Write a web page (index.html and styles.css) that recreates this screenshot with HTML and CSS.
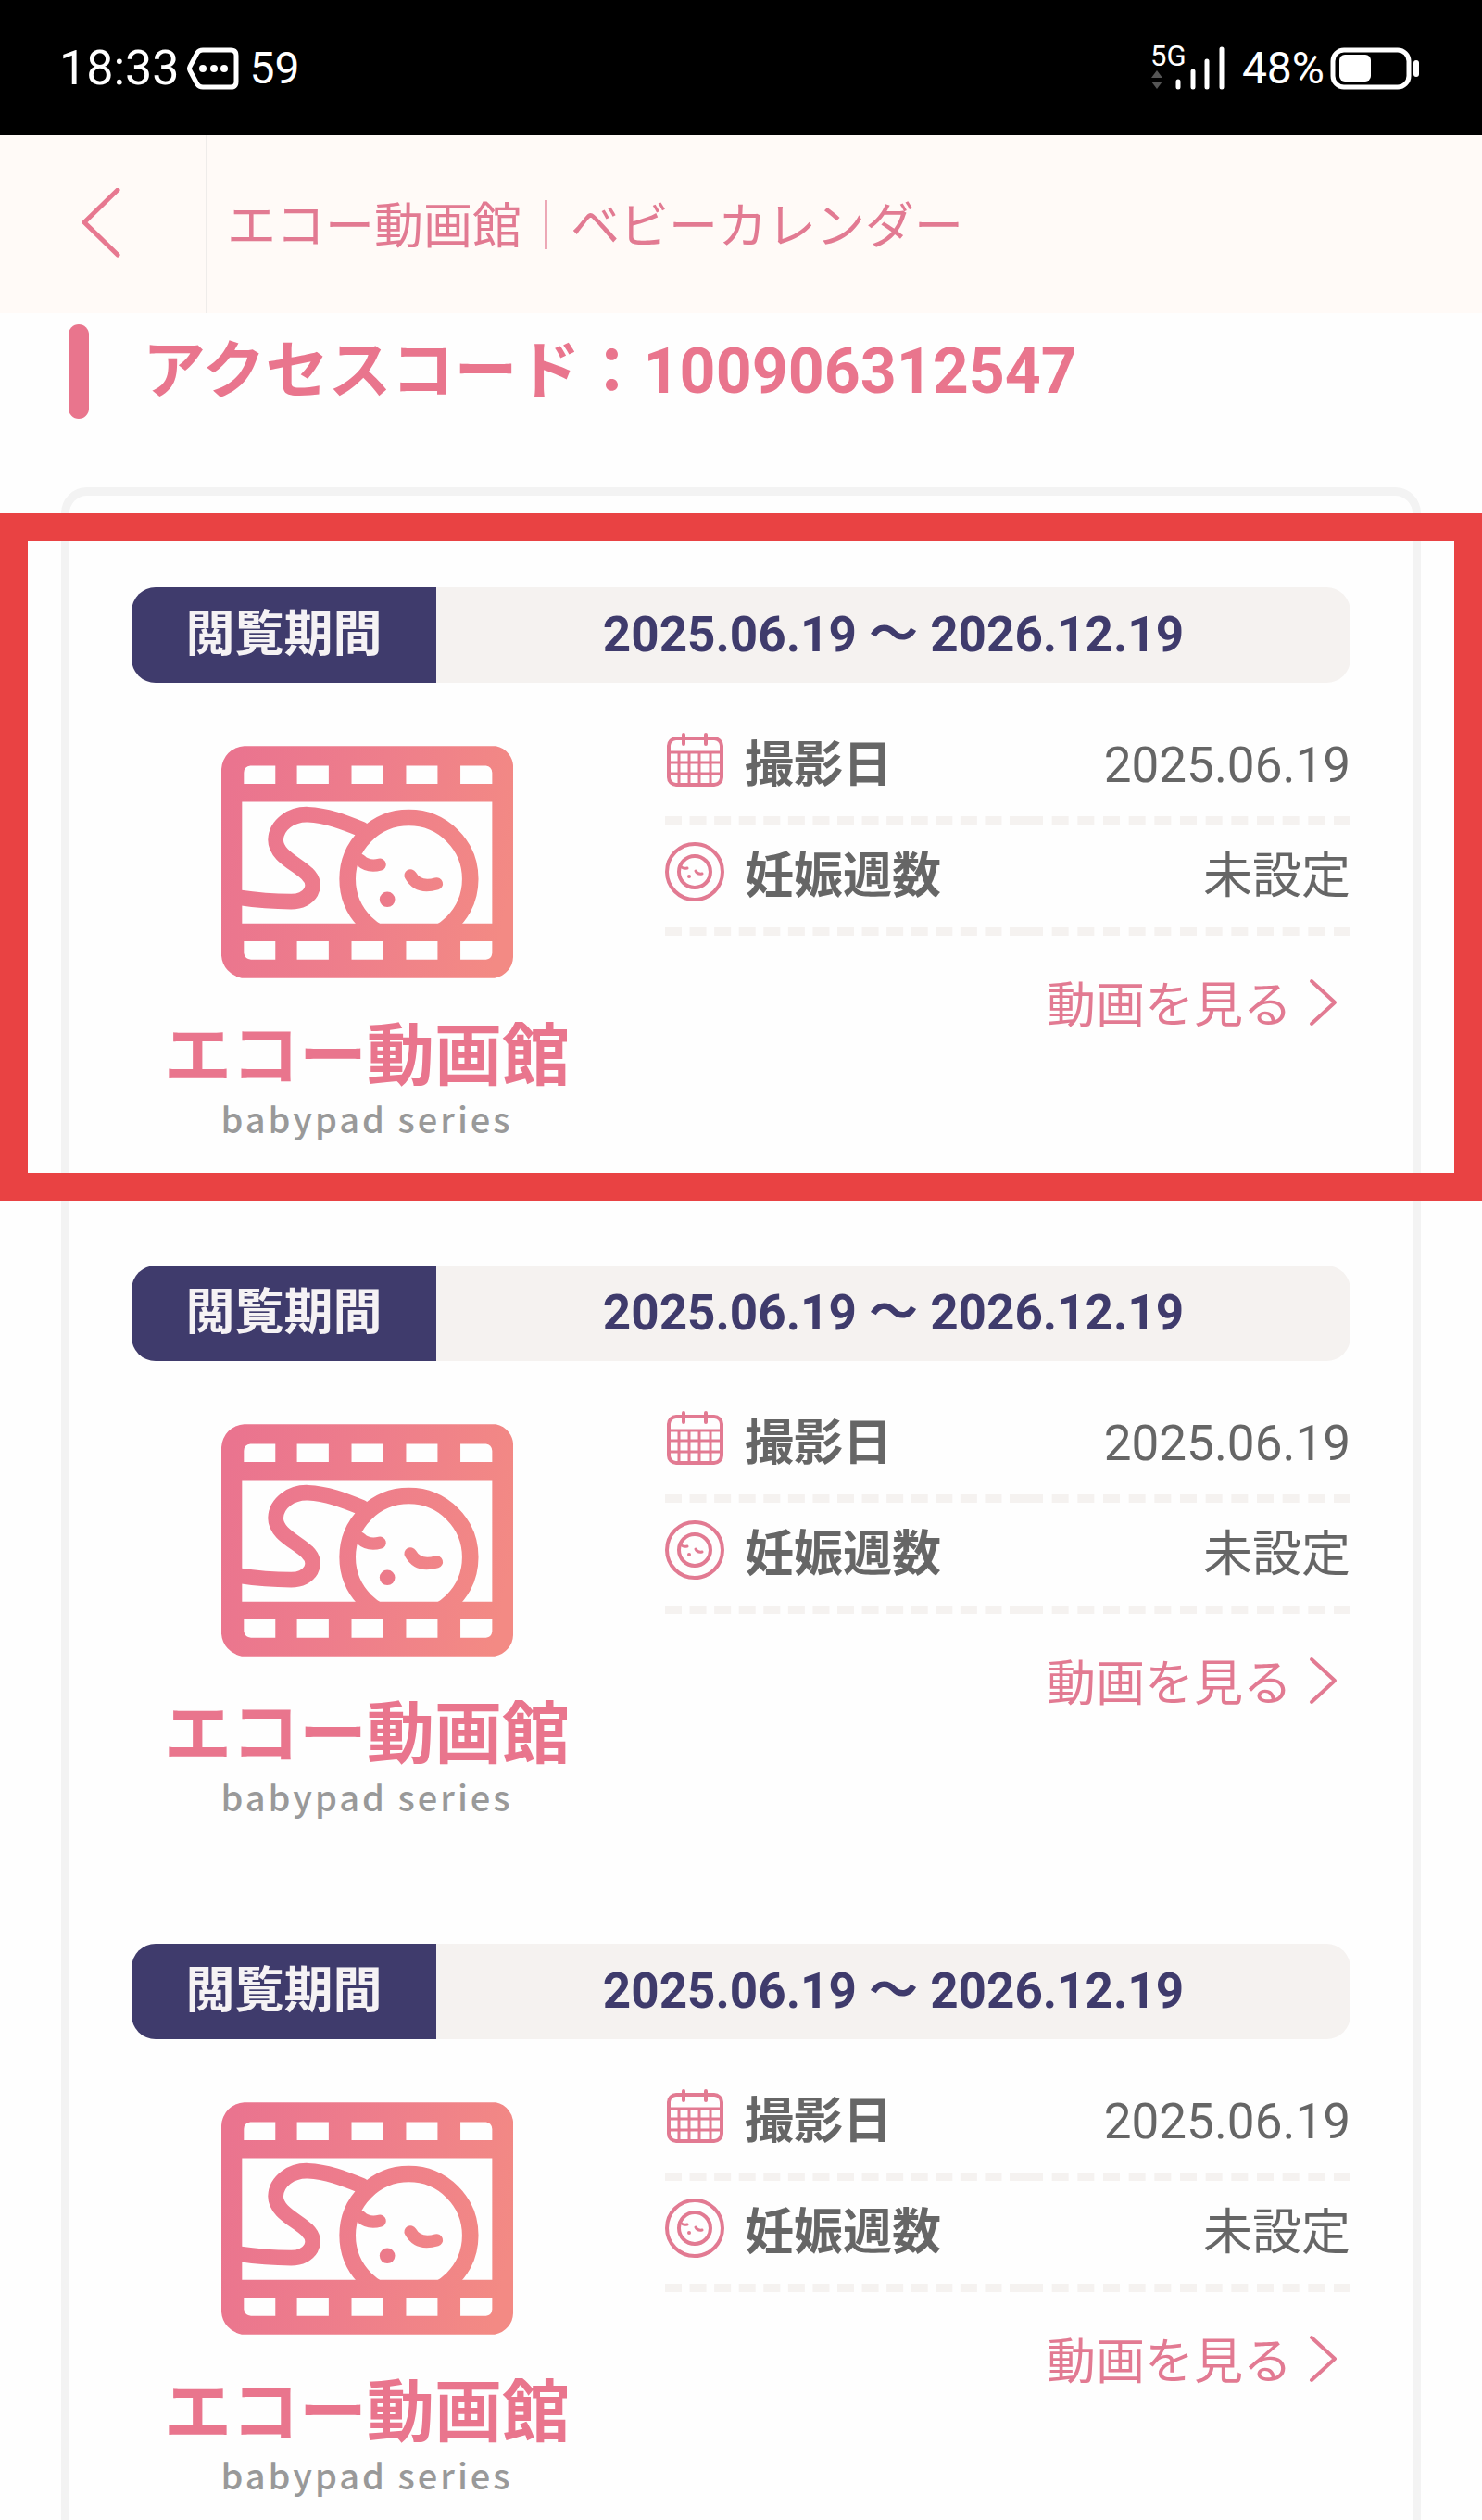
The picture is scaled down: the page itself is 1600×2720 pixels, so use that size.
FILE: index.html
```html
<!DOCTYPE html>
<html lang="ja">
<head>
<meta charset="utf-8">
<meta name="viewport" content="width=device-width, initial-scale=1">
<title>エコー動画館｜ベビーカレンダー</title>
<link rel="stylesheet" href="styles.css">
</head>
<body>
<svg class="defs" aria-hidden="true">
  <defs>
    <linearGradient id="film-fill" gradientUnits="userSpaceOnUse" x1="54" y1="300" x2="1000" y2="500">
      <stop offset="0" stop-color="#ea748f"/>
      <stop offset="0.5" stop-color="#ee7e8b"/>
      <stop offset="1" stop-color="#f38a84"/>
    </linearGradient>
    <clipPath id="film-window"><rect x="110" y="250" width="830" height="410"/></clipPath>
  </defs>
  <symbol id="film" viewBox="54 76 946 752">
    <path fill="url(#film-fill)" fill-rule="evenodd" d="M128 76H944A70 70 0 0 1 1000 150V755A72 72 0 0 1 940 828H120A80 80 0 0 1 54 755V150A78 78 0 0 1 128 76ZM121 257V651H932V257ZM148 140Q128 142 127 162V198H229V140ZM299 140V198H402V140ZM476 140V198H578V140ZM653 140V198H755V140ZM829 140V198H932V162Q930 142 912 140ZM127 709V747Q130 766 150 768H229V709ZM299 709V768H402V709ZM476 709V768H578V709ZM653 709V768H755V709ZM829 709V768H912Q930 766 932 747V709Z"/>
    <g clip-path="url(#film-window)" fill="none" stroke="url(#film-fill)" stroke-linecap="round">
      <path stroke-width="50" d="M110 567C170 576 220 580 280 580C342 580 372 528 332 490C300 458 230 432 230 380C232 330 282 296 335 298C395 300 450 322 510 346"/>
      <circle cx="662" cy="507" r="199" stroke-width="53"/>
      <path stroke-width="40" d="M505 446Q530 470 568 460M667 495Q692 540 752 522"/>
      <circle cx="592" cy="573" r="25" fill="#ec7a8a" stroke="none"/>
    </g>
  </symbol>
  <symbol id="calendar" viewBox="0 0 64 64">
    <g fill="none" stroke="#e27a92" stroke-width="4" stroke-linecap="round">
      <rect x="4" y="8" width="57" height="50" rx="8"/>
      <path stroke-width="3" d="M4 23H61M4 34H61M4 46H61M15 23V57M26 23V57M37 23V57M49 23V57"/>
      <path d="M20 4V14M44 4V14"/>
    </g>
  </symbol>
  <symbol id="baby" viewBox="0 0 64 64">
    <g fill="none" stroke="#e27a92" stroke-width="4" stroke-linecap="round">
      <circle cx="32" cy="32" r="30"/>
      <circle cx="32" cy="32" r="17"/>
      <path stroke-width="3" d="M18 27Q20 29 24 28M33 31Q35 35 40 34"/>
      <circle cx="26" cy="37" r="2" fill="#e27a92" stroke="none"/>
    </g>
  </symbol>
  <symbol id="next" viewBox="0 0 32 52">
    <path fill="none" stroke="#e27a92" stroke-width="4" stroke-linecap="round" stroke-linejoin="round" d="M3 3L28 26L3 49"/>
  </symbol>
</svg>

<div class="app">
  <div class="status">
    <div class="status-group">
      <span class="clock">18:33</span>
      <svg class="message" viewBox="0 0 56 46" aria-hidden="true">
        <path fill="none" stroke="#fff" stroke-width="5" stroke-linejoin="round" d="M17 3H47Q53 3 53 9V37Q53 43 47 43H17Q13 43 11 40L3 25Q2 23 3 21L11 6Q13 3 17 3Z"/>
        <g fill="#fff"><circle cx="17" cy="23" r="4"/><circle cx="29" cy="23" r="4"/><circle cx="40" cy="23" r="4"/></g>
      </svg>
      <span class="count">59</span>
    </div>
    <div class="status-group">
      <svg class="signal" viewBox="-4 -8 84 68" role="img" aria-label="5G">
        <text class="network" x="-3" y="23">5G</text>
        <path fill="#555" d="M4 28L10 36H-2ZM4 48L10 40H-2Z"/>
        <path stroke="#fff" stroke-width="5" stroke-linecap="round" d="M27 40V46M43 29V46M58 18V46M74 5V46"/>
      </svg>
      <span class="battery-level">48%</span>
      <svg class="battery" viewBox="0 0 98 46" aria-hidden="true">
        <rect x="3" y="3" width="82" height="40" rx="12" fill="none" stroke="#fff" stroke-width="5"/>
        <rect x="10" y="8" width="34" height="29" rx="6" fill="#fff"/>
        <rect x="90" y="14" width="6" height="18" rx="3" fill="#fff"/>
      </svg>
    </div>
  </div>

  <header class="header">
    <button class="back" type="button" aria-label="戻る">
      <svg viewBox="0 0 44 78" aria-hidden="true"><path fill="none" stroke="#e77890" stroke-width="5" stroke-linecap="round" stroke-linejoin="round" d="M40 2L4 37L40 72"/></svg>
    </button>
    <span class="header-title">エコー動画館｜ベビーカレンダー</span>
  </header>

  <main class="content">
    <h1 class="code">アクセスコード：100906312547</h1>
    <div class="card">
      <section class="item">
        <div class="highlight"></div>
        <div class="period"><h2 class="period-label">閲覧期間</h2><p class="period-value">2025.06.19 〜 2026.12.19</p></div>
        <div class="item-body">
          <div class="logo"><svg class="film" aria-hidden="true"><use href="#film"/></svg><p class="logo-name">エコー動画館</p><p class="logo-series">babypad series</p></div>
          <div class="detail">
            <table class="facts">
              <tr><th scope="row"><span class="fact-label"><svg aria-hidden="true"><use href="#calendar"/></svg>撮影日</span></th><td>2025.06.19</td></tr>
              <tr><th scope="row"><span class="fact-label"><svg aria-hidden="true"><use href="#baby"/></svg>妊娠週数</span></th><td>未設定</td></tr>
            </table>
            <a class="watch" href="#">動画を見る<svg aria-hidden="true"><use href="#next"/></svg></a>
          </div>
        </div>
      </section>
      <section class="item">
        <div class="period"><h2 class="period-label">閲覧期間</h2><p class="period-value">2025.06.19 〜 2026.12.19</p></div>
        <div class="item-body">
          <div class="logo"><svg class="film" aria-hidden="true"><use href="#film"/></svg><p class="logo-name">エコー動画館</p><p class="logo-series">babypad series</p></div>
          <div class="detail">
            <table class="facts">
              <tr><th scope="row"><span class="fact-label"><svg aria-hidden="true"><use href="#calendar"/></svg>撮影日</span></th><td>2025.06.19</td></tr>
              <tr><th scope="row"><span class="fact-label"><svg aria-hidden="true"><use href="#baby"/></svg>妊娠週数</span></th><td>未設定</td></tr>
            </table>
            <a class="watch" href="#">動画を見る<svg aria-hidden="true"><use href="#next"/></svg></a>
          </div>
        </div>
      </section>
      <section class="item">
        <div class="period"><h2 class="period-label">閲覧期間</h2><p class="period-value">2025.06.19 〜 2026.12.19</p></div>
        <div class="item-body">
          <div class="logo"><svg class="film" aria-hidden="true"><use href="#film"/></svg><p class="logo-name">エコー動画館</p><p class="logo-series">babypad series</p></div>
          <div class="detail">
            <table class="facts">
              <tr><th scope="row"><span class="fact-label"><svg aria-hidden="true"><use href="#calendar"/></svg>撮影日</span></th><td>2025.06.19</td></tr>
              <tr><th scope="row"><span class="fact-label"><svg aria-hidden="true"><use href="#baby"/></svg>妊娠週数</span></th><td>未設定</td></tr>
            </table>
            <a class="watch" href="#">動画を見る<svg aria-hidden="true"><use href="#next"/></svg></a>
          </div>
        </div>
      </section>
    </div>
  </main>
</div>
</body>
</html>
```
FILE: styles.css
```css
* { box-sizing: border-box; }

body {
  margin: 0;
  background: #fefefe;
  color: #666;
  font-family: Roboto, "Noto Sans CJK JP", sans-serif;
  font-size: 53px;
  line-height: 64px;
}

h1, h2, p { margin: 0; }
svg { display: block; flex: none; }
.defs { position: absolute; width: 0; height: 0; }

.app {
  display: flex;
  flex-direction: column;
  height: 100vh;
}

/* Status bar */
.status {
  display: flex;
  justify-content: space-between;
  align-items: center;
  flex: none;
  height: 146px;
  padding: 2px 66px 0 64px;
  background: #000;
  color: #fff;
  font-size: 48px;
}
.status-group { display: flex; align-items: center; }
.clock { font-size: 52px; }
.message { width: 56px; height: 46px; margin: 0 12px 0 8px; }
.signal { width: 84px; height: 68px; margin-right: 16px; }
.network { fill: #fff; font-size: 31px; }
.battery { width: 98px; height: 46px; margin-left: 6px; }

/* Page header */
.header {
  display: flex;
  flex: none;
  height: 192px;
  background: #fffaf7;
  color: #e27a92;
}
.back {
  display: grid;
  place-items: center;
  width: 224px;
  padding: 0 4px 0 0;
  border: 0;
  border-right: 2px solid #efecea;
  background: none;
}
.back svg { width: 44px; height: 78px; }
.header-title { align-self: center; padding: 6px 0 0 21px; }

.content {
  flex: 1;
  min-height: 0;
  overflow-y: auto;
  scrollbar-width: none;
}

.code {
  display: flex;
  align-items: center;
  margin: 12px 74px 74px;
  color: #e9758d;
  font-size: 68px;
  line-height: 102px;
}
.code::before {
  content: "";
  width: 22px;
  height: 102px;
  margin-right: 58px;
  border-radius: 11px;
  background: #e9758d;
}

.card {
  margin: 0 66px;
  padding: 99px 67px 0;
  border: 9px solid #f3f3f3;
  border-radius: 28px;
}

.item { position: relative; min-height: 732px; }

.highlight {
  position: absolute;
  inset: -80px -142px 70px;
  border: 30px solid #e94243;
  pointer-events: none;
}

.period {
  display: flex;
  overflow: hidden;
  border-radius: 26px;
  background: #f5f2f0;
  line-height: 103px;
  font-weight: 700;
}
.period-label {
  width: 329px;
  background: #3f3b6c;
  color: #f5f2f4;
  font-size: 53px;
  text-align: center;
}
.period-value { flex: 1; color: #3f3b6c; text-align: center; }

.item-body {
  display: grid;
  grid-template-columns: 508fr 740fr;
  gap: 68px;
  padding-top: 33px;
}

.logo {
  display: flex;
  flex-direction: column;
  align-items: center;
  padding-top: 35px;
}
.film { width: 315px; height: 251px; }
.logo-name {
  margin-top: 44px;
  color: #e9758d;
  font-size: 73px;
  font-weight: 700;
  line-height: 80px;
}
.logo-series {
  color: #999;
  font-family: "Noto Sans CJK JP", sans-serif;
  font-size: 38px;
  font-weight: 500;
  letter-spacing: 3px;
  line-height: 53px;
}

.facts {
  width: 100%;
  border-spacing: 0;
  table-layout: fixed;
}
.facts th, .facts td {
  height: 120px;
  padding: 0;
  border-bottom: 9px dashed #f5f2f0;
}
.facts th { width: 390px; text-align: left; }
.facts td { text-align: right; }
.fact-label { display: flex; align-items: center; gap: 22px; }
.fact-label svg { width: 64px; height: 64px; margin-bottom: 10px; }

.watch {
  display: flex;
  justify-content: flex-end;
  align-items: center;
  gap: 18px;
  margin-top: 44px;
  padding-right: 13px;
  color: #e27a92;
  text-decoration: none;
}
.watch svg { width: 32px; height: 52px; margin-bottom: 8px; }
```
